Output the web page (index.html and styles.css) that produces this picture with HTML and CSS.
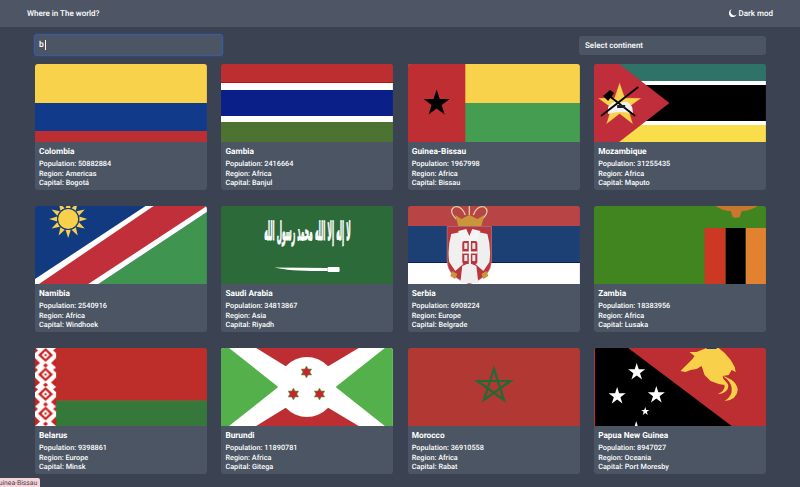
FILE: index.html
```html
<!DOCTYPE html>
<html lang="en">
<head>
<meta charset="utf-8">
<title>Where in The world?</title>
<link rel="stylesheet" href="styles.css">
</head>
<body>
<header class="topbar">
  <span class="brand">Where in The world?</span>
  <span class="mode">
    <svg class="moon" viewBox="0 0 16 16"><path d="M5.500 0.600A8 8 0 1 0 15.400 10.500 7 7 0 0 1 5.500 0.600Z" fill="#fff"/></svg>
    Dark mod
  </span>
</header>
<main class="page">
  <div class="toolbar">
    <div class="search">b<span class="caret"></span></div>
    <select class="continent"><option>Select continent</option></select>
  </div>
  <section class="grid">

    <article class="card">
      <svg class="flag" viewBox="0 0 171 78" preserveAspectRatio="none">
        <rect width="171" height="39" fill="#f8d24b"/><rect y="39" width="171" height="28" fill="#123a8b"/><rect y="67" width="171" height="11" fill="#bd2e32"/>
      </svg>
      <div class="info"><h2>Colombia</h2><p><b>Population:</b> 50882884</p><p><b>Region:</b> Americas</p><p><b>Capital:</b> Bogotá</p></div>
    </article>

    <article class="card">
      <svg class="flag" viewBox="0 0 171 78" preserveAspectRatio="none">
        <rect width="171" height="19" fill="#bd2e31"/><rect y="18" width="171" height="1" fill="#c00d10"/><rect y="19" width="171" height="7" fill="#fff"/><rect y="26" width="171" height="26" fill="#0a2088"/><rect y="52" width="171" height="6" fill="#fff"/><rect y="58" width="171" height="20" fill="#4c7332"/>
      </svg>
      <div class="info"><h2>Gambia</h2><p><b>Population:</b> 2416664</p><p><b>Region:</b> Africa</p><p><b>Capital:</b> Banjul</p></div>
    </article>

    <article class="card">
      <svg class="flag" viewBox="0 0 171 78" preserveAspectRatio="none">
        <rect width="171" height="39" fill="#f8d24b"/><rect y="39" width="171" height="39" fill="#459d51"/><rect width="57" height="78" fill="#bf2e32"/>
        <polygon points="28.500,25.500 31.600,35 41.500,35 33.500,40.900 36.500,50.400 28.500,44.500 20.500,50.400 23.500,40.900 15.500,35 25.400,35" fill="#000"/>
      </svg>
      <div class="info"><h2>Guinea-Bissau</h2><p><b>Population:</b> 1967998</p><p><b>Region:</b> Africa</p><p><b>Capital:</b> Bissau</p></div>
    </article>

    <article class="card">
      <svg class="flag" viewBox="0 0 171 78" preserveAspectRatio="none">
        <rect width="171" height="17" fill="#2f7268"/><rect y="17" width="171" height="4" fill="#fff"/><rect y="21" width="171" height="36" fill="#000"/><rect y="57" width="171" height="4" fill="#fff"/><rect y="61" width="171" height="17" fill="#fadd4a"/>
        <polygon points="0,0 25,0 75,39 25,78 0,78" fill="#bf2e3a"/>
        <polygon points="25.500,18 30.800,33.700 47.400,33.900 34,43.800 39,60.600 25.500,50 12,60.600 17,43.800 3.600,33.900 20.200,33.700" fill="#f8d24b" stroke="#c8222f" stroke-width=".5"/>
        <path d="M14 43Q20 35 27 39Q33 35 38 43L39 50Q27 46 14 50Z" fill="#f1f1f1"/>
        <path d="M7 52L44 23" stroke="#000" stroke-width="1.800"/>
        <path d="M14 31L41 52" stroke="#000" stroke-width="1.800"/>
        <path d="M9 32L16 26L20 29L14 37Z" fill="#000"/><path d="M23 41h8v3h-8z" fill="#222"/>
      </svg>
      <div class="info"><h2>Mozambique</h2><p><b>Population:</b> 31255435</p><p><b>Region:</b> Africa</p><p><b>Capital:</b> Maputo</p></div>
    </article>

    <article class="card">
      <svg class="flag" viewBox="0 0 171 78" preserveAspectRatio="none">
        <rect width="171" height="78" fill="#123a80"/>
        <polygon points="171,6 171,78 63,78" fill="#3f944f"/>
        <polygon points="0,73 110,0 171,0 171,6 63,78 0,78" fill="#fff"/>
        <polygon points="4,78 118,0 171,0 53,78" fill="#c12f3b"/>
        <g transform="translate(33 13)">
          <g fill="#f8d04a">
            <polygon points="-2.500,-11 0,-19 2.500,-11"/>
            <polygon points="-2.500,-11 0,-19 2.500,-11" transform="rotate(30)"/><polygon points="-2.500,-11 0,-19 2.500,-11" transform="rotate(60)"/><polygon points="-2.500,-11 0,-19 2.500,-11" transform="rotate(90)"/><polygon points="-2.500,-11 0,-19 2.500,-11" transform="rotate(120)"/><polygon points="-2.500,-11 0,-19 2.500,-11" transform="rotate(150)"/><polygon points="-2.500,-11 0,-19 2.500,-11" transform="rotate(180)"/><polygon points="-2.500,-11 0,-19 2.500,-11" transform="rotate(210)"/><polygon points="-2.500,-11 0,-19 2.500,-11" transform="rotate(240)"/><polygon points="-2.500,-11 0,-19 2.500,-11" transform="rotate(270)"/><polygon points="-2.500,-11 0,-19 2.500,-11" transform="rotate(300)"/><polygon points="-2.500,-11 0,-19 2.500,-11" transform="rotate(330)"/>
          </g>
          <circle r="10.500" fill="#f8d04a" stroke="#123a80" stroke-width="1"/>
        </g>
      </svg>
      <div class="info"><h2>Namibia</h2><p><b>Population:</b> 2540916</p><p><b>Region:</b> Africa</p><p><b>Capital:</b> Windhoek</p></div>
    </article>

    <article class="card">
      <svg class="flag" viewBox="0 0 171 78" preserveAspectRatio="none">
        <rect width="171" height="78" fill="#2c6a3a"/>
        <text class="shahada" transform="translate(86 34) scale(1 4.200)" text-anchor="middle">لا إله إلا الله محمد رسول الله</text>
        <path d="M53 61.500L106 62L106 65Q70 65.500 53 61.500Z" fill="#fff"/>
        <rect x="106" y="61" width="12" height="5" rx="1" fill="#fff"/>
      </svg>
      <div class="info"><h2>Saudi Arabia</h2><p><b>Population:</b> 34813867</p><p><b>Region:</b> Asia</p><p><b>Capital:</b> Riyadh</p></div>
    </article>

    <article class="card">
      <svg class="flag" viewBox="0 0 171 78" preserveAspectRatio="none">
        <rect width="171" height="20" fill="#b94446"/><rect y="20" width="171" height="36" fill="#1c3f74"/><rect y="56" width="171" height="1" fill="#0b1a6a"/><rect y="57" width="171" height="21" fill="#fff"/>
        <path d="M48 13Q40 5 46 1Q53 -1 57 9M74 13Q82 5 76 1Q69 -1 65 9M61 0V9" stroke="#d8d2a0" stroke-width="1.300" fill="none"/>
        <path d="M47 9L53 13L61 9L69 13L76 9L73 20H50Z" fill="#c9973a"/>
        <path d="M39 20.500H83V55Q83 71 61 78Q39 71 39 55Z" fill="#b8363c" stroke="#c98a8a" stroke-width=".6"/>
        <path d="M57 25L43 28Q39 42 41 56L47 65L55 58ZM65 25L79 28Q83 42 81 56L75 65L67 58Z" fill="#efefef"/>
        <path d="M50 25L58 23L61 30L64 23L72 25L69 35H53Z" fill="#f4f4f4"/>
        <path d="M54 60L61 57L68 60L70 77H52Z" fill="#efefef"/>
        <rect x="54" y="35" width="15" height="23" rx="2" fill="#b8363c"/>
        <path d="M60.500 35h2v23h-2zM54 45.500h15v2h-15z" fill="#fff"/>
        <path d="M56 37h3v6h-3zM64 37h3v6h-3zM56 49h3v6h-3zM64 49h3v6h-3z" fill="#e8e8e8"/>
        <path d="M44 65l5 3-2 5-5-3zM78 65l-5 3 2 5 5-3z" fill="#c9973a"/>
      </svg>
      <div class="info"><h2>Serbia</h2><p><b>Population:</b> 6908224</p><p><b>Region:</b> Europe</p><p><b>Capital:</b> Belgrade</p></div>
    </article>

    <article class="card">
      <svg class="flag" viewBox="0 0 171 78" preserveAspectRatio="none">
        <rect width="171" height="78" fill="#40851f"/>
        <rect x="110" y="22" width="21" height="56" fill="#cc3823"/><rect x="131" y="22" width="20" height="56" fill="#000"/><rect x="151" y="22" width="20" height="56" fill="#e28230"/>
        <path d="M121 0H163Q155 5 147 5L145 11L141 12L138 11L136 5Q128 5 121 0Z" fill="#c9772e"/>
      </svg>
      <div class="info"><h2>Zambia</h2><p><b>Population:</b> 18383956</p><p><b>Region:</b> Africa</p><p><b>Capital:</b> Lusaka</p></div>
    </article>

    <article class="card">
      <svg class="flag" viewBox="0 0 171 78" preserveAspectRatio="none">
        <defs>
          <pattern id="ornament" width="21" height="19.500" patternUnits="userSpaceOnUse">
            <rect width="21" height="19.500" fill="#fff"/>
            <path d="M10.500 0L18 7L10.500 14L3 7ZM10.500 15L13 17.500L10.500 19.500L8 17.500ZM0 10L5 15L0 19.500ZM21 10L16 15L21 19.500ZM0 0L3 2.500L0 5ZM21 0L18 2.500L21 5Z" fill="#c8211f"/>
            <path d="M10.500 3L14.500 7L10.500 11L6.500 7Z" fill="#fff"/>
            <path d="M10.500 5.500L12 7L10.500 8.500L9 7Z" fill="#c8211f"/>
          </pattern>
        </defs>
        <rect width="171" height="53" fill="#bd2e2b"/><rect y="53" width="171" height="25" fill="#35783a"/><rect y="52" width="171" height="1" fill="#7a5a30"/>
        <rect width="21" height="78" fill="url(#ornament)"/>
      </svg>
      <div class="info"><h2>Belarus</h2><p><b>Population:</b> 9398861</p><p><b>Region:</b> Europe</p><p><b>Capital:</b> Minsk</p></div>
    </article>

    <article class="card">
      <svg class="flag" viewBox="0 0 171 78" preserveAspectRatio="none">
        <rect width="171" height="78" fill="#fff"/>
        <polygon points="0,0 8,0 57,39 8,78 0,78" fill="#54b04a"/><polygon points="171,0 163,0 114,39 163,78 171,78" fill="#54b04a"/>
        <polygon points="35,0 137,0 107,18 64,18" fill="#bd2e32"/><polygon points="35,78 137,78 107,60 64,60" fill="#bd2e32"/>
        <ellipse cx="85.500" cy="39" rx="29" ry="30" fill="#fff"/>
        <g fill="#c1272d" stroke="#54b04a" stroke-width=".6">
          <polygon points="85,18 86.700,21 90.200,21 88.500,24 90.200,27 86.700,27 85,30 83.300,27 79.800,27 81.500,24 79.800,21 83.300,21"/>
          <polygon points="72,40 73.700,43 77.200,43 75.500,46 77.200,49 73.700,49 72,52 70.300,49 66.800,49 68.500,46 66.800,43 70.300,43"/>
          <polygon points="98,40 99.700,43 103.200,43 101.500,46 103.200,49 99.700,49 98,52 96.300,49 92.800,49 94.500,46 92.800,43 96.300,43"/>
        </g>
      </svg>
      <div class="info"><h2>Burundi</h2><p><b>Population:</b> 11890781</p><p><b>Region:</b> Africa</p><p><b>Capital:</b> Gitega</p></div>
    </article>

    <article class="card">
      <svg class="flag" viewBox="0 0 171 78" preserveAspectRatio="none">
        <rect width="171" height="78" fill="#b23833"/>
        <polygon points="85.500,21 95.500,52 69,33 102,33 75.500,52" fill="none" stroke="#1f6a35" stroke-width="2.200"/>
      </svg>
      <div class="info"><h2>Morocco</h2><p><b>Population:</b> 36910558</p><p><b>Region:</b> Africa</p><p><b>Capital:</b> Rabat</p></div>
    </article>

    <article class="card">
      <svg class="flag" viewBox="0 0 171 78" preserveAspectRatio="none">
        <rect width="171" height="78" fill="#bd2e32"/>
        <polygon points="1,0 34,0 137,78 1,78" fill="#000"/>
        <g fill="#fff">
          <polygon points="42.500,15 44.500,21.300 51,21.300 45.800,25.200 47.800,31.500 42.500,27.600 37.200,31.500 39.200,25.200 34,21.300 40.500,21.300"/>
          <polygon points="23,39 25,45.300 31.500,45.300 26.300,49.200 28.300,55.500 23,51.600 17.700,55.500 19.700,49.200 14.500,45.300 21,45.300"/>
          <polygon points="62,38 64,44.300 70.500,44.300 65.300,48.200 67.300,54.500 62,50.600 56.700,54.500 58.700,48.200 53.500,44.300 60,44.300"/>
          <polygon points="51,59 52,62 55,62 52.600,63.800 53.500,67 51,65 48.500,67 49.400,63.800 47,62 50,62"/>
          <polygon points="42,73 43.500,78 40.500,78"/>
        </g>
        <path d="M112 0H124L130 5L136 12L140 19L141 24L137 22L134 27L128 28L130 37L124 36L116 33L110 27L107 18L102 21L96 22L91 24L86 23L92 17L98 11L100 8L95 4L102 4Z" fill="#f8d04a"/>
        <path d="M128 28Q142 32 143 42Q142 52 130 53Q138 48 137 40Q136 33 128 28ZM126 29Q136 36 133 41Q130 46 123 46Q130 43 130 38Q129 33 126 29Z" fill="#f8d04a"/>
        <rect x="112" y="0" width="10" height="1" fill="#1c3f74"/>
      </svg>
      <div class="info"><h2>Papua New Guinea</h2><p><b>Population:</b> 8947027</p><p><b>Region:</b> Oceania</p><p><b>Capital:</b> Port Moresby</p></div>
    </article>

  </section>
</main>
<div class="tooltip">Guinea-Bissau</div>
</body>
</html>
```

FILE: styles.css
```css
* { box-sizing: border-box; }
html, body { margin: 0; height: 100%; }
body {
  height: 487px;
  overflow: hidden;
  background: #3b4252;
  color: #fff;
  font-family: Roboto, "Liberation Sans", sans-serif;
  text-rendering: geometricPrecision;
  position: relative;
}
.topbar {
  height: 27px;
  padding: 0 27px;
  display: flex;
  align-items: center;
  justify-content: space-between;
  background: #4e5665;
  font-size: 8px;
  font-weight: 500;
}
.mode { display: flex; align-items: center; gap: 1px; }
.moon { width: 8px; height: 8px; margin-top: -2px; }
.page { padding: 7px 34px 0 35px; }
.toolbar {
  display: flex;
  justify-content: space-between;
  align-items: center;
  height: 22px;
  margin: 0 0 8px;
}
.search {
  width: 189px;
  height: 22px;
  margin-left: -1px;
  padding: 0 4px;
  display: flex;
  align-items: center;
  background: #4b5563;
  border: 1px solid #3b5b9f;
  border-radius: 3px;
  box-shadow: 0 0 0 .5px #2f4d8c;
  font-size: 8.500px;
  font-weight: 500;
}
.caret { width: 1px; height: 10px; margin-left: 1px; background: #fff; }
.continent {
  appearance: none;
  width: 187px;
  height: 19px;
  padding: 0 6px;
  border: 0;
  border-radius: 3px;
  background: #4b5563;
  color: #fff;
  font: 500 8px Roboto, "Liberation Sans", sans-serif;
  text-rendering: geometricPrecision;
}
.grid {
  display: grid;
  grid-template-columns: repeat(4, 1fr);
  gap: 16px 14.500px;
}
.card {
  height: 126px;
  display: flex;
  flex-direction: column;
  background: #4b5563;
  border-radius: 3px;
  overflow: hidden;
}
.flag { display: block; width: 100%; height: 78px; flex: none; }
.info { padding: 5px 4px 0; }
.info h2 { margin: 0 0 1px; font-size: 8.300px; line-height: 11px; font-weight: 700; }
.info p { margin: 0; font-size: 7.300px; line-height: 9.700px; font-weight: 500; }
.info b { font-weight: 500; }
.shahada { font-family: "DejaVu Sans", sans-serif; font-size: 6px; font-weight: 700; fill: #fff; stroke: #fff; stroke-width: .25px; }
.tooltip {
  position: absolute;
  left: -9px;
  bottom: 0;
  height: 9px;
  padding: 0 3px;
  background: #f7d3dc;
  border-radius: 2px 2px 0 0;
  color: #444;
  font-size: 6.800px;
  line-height: 10px;
  white-space: nowrap;
}
```
